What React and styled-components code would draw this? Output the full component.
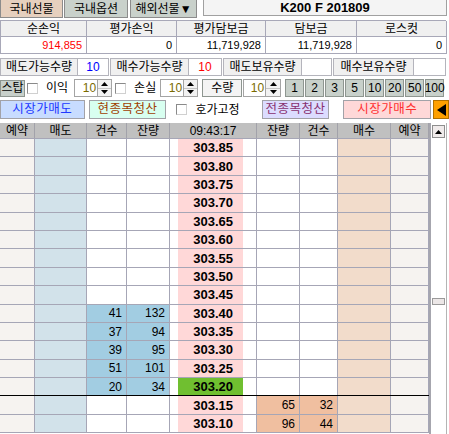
import React from "react";
import styled, { createGlobalStyle } from "styled-components";

const GlobalStyle = createGlobalStyle`
  html, body { margin: 0; padding: 0; background: #fff; }
  body {
    font-family: "Liberation Sans", "Noto Sans CJK KR", sans-serif;
    font-size: 12px;
    color: #000;
  }
  * { box-sizing: border-box; }
`;

const Page = styled.div`
  width: 449px;
  height: 434px;
  overflow: hidden;
  background: #fff;
  display: flex;
  flex-direction: column;
`;

/* ---------- top tabs ---------- */
const TopBar = styled.div`
  display: flex;
  align-items: flex-start;
  height: 20px;
`;

const Tab = styled.div`
  width: ${(p) => p.$w}px;
  height: 18px;
  margin-left: ${(p) => p.$ml || 0}px;
  background: ${(p) => (p.$active ? "#e6d0be" : "#c9d1cb")};
  border: 1px solid #8c8c8c;
  border-top: none;
  display: flex;
  align-items: center;
  justify-content: center;
  font-size: 12px;
  line-height: 16px;
`;

const SymbolBox = styled.div`
  width: 244px;
  height: 16px;
  margin-left: 6px;
  background: #f4f4f4;
  border: 1px solid #a0a0a0;
  border-top: none;
  display: flex;
  align-items: center;
  justify-content: center;
  font-weight: bold;
  font-size: 13px;
`;

/* ---------- summary table ---------- */
const Summary = styled.div`
  display: grid;
  grid-template-columns: 86px 90px 89px 91px 90px;
  grid-template-rows: 16px 17px;
  width: 446px;
  border-top: 1px solid #a8a8b8;
  border-left: 1px solid #a8a8b8;
`;

const SumHead = styled.div`
  background: #f0f0f0;
  border-right: 1px solid #a8a8b8;
  border-bottom: 1px solid #a8a8b8;
  display: flex;
  align-items: center;
  justify-content: center;
  line-height: 14px;
`;

const SumValue = styled.div`
  background: #fff;
  border-right: 1px solid #a8a8b8;
  border-bottom: 1px solid #a8a8b8;
  display: flex;
  align-items: center;
  justify-content: flex-end;
  padding-right: 4px;
  font-size: 11px;
  color: ${(p) => p.$color || "#000"};
`;

/* ---------- quantity row ---------- */
const QtyRow = styled.div`
  display: flex;
  height: 18px;
  margin-top: 4px;
`;

const QtyLabel = styled.div`
  width: ${(p) => p.$w}px;
  margin-left: ${(p) => p.$ml || 0}px;
  background: #f0f0f0;
  border: 1px solid #b4b4bc;
  display: flex;
  align-items: center;
  justify-content: center;
  line-height: 16px;
`;

const QtyValue = styled.div`
  width: ${(p) => p.$w}px;
  background: #fff;
  border: 1px solid #b4b4bc;
  border-left: none;
  display: flex;
  align-items: center;
  justify-content: center;
  font-size: 12px;
  color: ${(p) => p.$color || "#000"};
`;

/* ---------- control row ---------- */
const ControlRow = styled.div`
  display: flex;
  align-items: center;
  height: 18px;
  margin-top: 3px;
`;

const GrayButton = styled.div`
  width: ${(p) => p.$w}px;
  height: ${(p) => p.$h || 17}px;
  margin-left: ${(p) => p.$ml || 0}px;
  background: ${(p) => p.$bg || "#c8d0ca"};
  border: 1px solid #8e9690;
  display: flex;
  align-items: center;
  justify-content: center;
  font-size: 12px;
  line-height: 14px;
`;

const CheckBox = styled.div`
  width: 11px;
  height: 11px;
  margin-left: ${(p) => p.$ml || 0}px;
  background: #fff;
  border: 1px solid #8a8a8a;
  border-right-color: #d0d0d0;
  border-bottom-color: #d0d0d0;
  flex: none;
`;

const Label = styled.span`
  margin-left: ${(p) => p.$ml || 0}px;
  font-size: 12px;
  line-height: 14px;
  white-space: nowrap;
`;

const Spinner = styled.div`
  display: flex;
  height: 18px;
  margin-left: ${(p) => p.$ml || 0}px;
`;

const SpinInput = styled.div`
  width: ${(p) => p.$w}px;
  background: #fff;
  border: 1px solid #a4a4a4;
  color: #7a6a00;
  display: flex;
  align-items: center;
  justify-content: flex-end;
  padding-right: 1px;
  font-size: 12px;
`;

const SpinArrows = styled.div`
  width: ${(p) => p.$w || 14}px;
  display: flex;
  flex-direction: column;
  border: 1px solid #a4a4a4;
  border-left: none;
`;

const SpinBtn = styled.div`
  flex: 1;
  background: #f2f2f2;
  display: flex;
  align-items: center;
  justify-content: center;
  & + & {
    border-top: 1px solid #c4c4c4;
  }
`;

const NumButtons = styled.div`
  display: flex;
  gap: 1px;
  margin-left: ${(p) => p.$ml || 0}px;
`;

/* ---------- action row ---------- */
const ActionRow = styled.div`
  display: flex;
  align-items: center;
  height: 19px;
  margin-top: 3px;
`;

const ActionButton = styled.div`
  width: ${(p) => p.$w}px;
  height: 19px;
  margin-left: ${(p) => p.$ml || 0}px;
  background: ${(p) => p.$bg};
  color: ${(p) => p.$color};
  border: 1px solid #a2a2a8;
  display: flex;
  align-items: center;
  justify-content: center;
  font-size: 12.5px;
  line-height: 15px;
  letter-spacing: 0.5px;
`;

const ArrowButton = styled.div`
  width: 16px;
  height: 19px;
  margin-left: 2px;
  background: #ffa000;
  border: 1px solid #b07000;
  display: flex;
  align-items: center;
  justify-content: center;
`;

/* ---------- order book ---------- */
const COLS = "35px 52px 40px 43px 87px 43px 38px 53px 38px";

const BookArea = styled.div`
  display: flex;
  margin-top: 4px;
  flex: 1;
  min-height: 0;
`;

const Book = styled.div`
  width: 429px;
  display: flex;
  flex-direction: column;
`;

const BookRow = styled.div`
  display: grid;
  grid-template-columns: ${COLS};
  height: ${(p) => p.$h}px;
  flex: none;
  border-bottom: 1px solid ${(p) => (p.$divider ? "#000" : "#a6a6b6")};
`;

const HeadCell = styled.div`
  background: #c0c0c0;
  border-right: 1px solid #a2a2aa;
  display: flex;
  align-items: center;
  justify-content: center;
  font-size: 12px;
  line-height: 14px;
`;

const Cell = styled.div`
  background: ${(p) => p.$bg || "#fff"};
  border-right: 1px solid #a6a6b6;
  display: flex;
  align-items: center;
  justify-content: flex-end;
  padding-right: 4px;
  font-size: 12px;
`;

const PriceCell = styled.div`
  background: #fff;
  border-right: 1px solid #a6a6b6;
  display: flex;
  align-items: stretch;
  padding-left: 8px;
`;

const PriceBox = styled.div`
  width: 65px;
  background: ${(p) => (p.$current ? "#70bf30" : "#ffd8d8")};
  display: flex;
  align-items: center;
  justify-content: flex-end;
  padding-right: 10px;
  font-weight: bold;
  font-size: 13px;
`;

const ScrollBar = styled.div`
  width: 18px;
  border-left: 2px solid #a6a6ae;
  border-right: 1px solid #b4b4b4;
  background: #fff;
  display: flex;
  flex-direction: column;
  align-items: center;
`;

const ScrollUp = styled.div`
  width: 13px;
  height: 13px;
  margin-top: 2px;
  background: #f0ebeb;
  border: 1px solid #8e8e8e;
  display: flex;
  align-items: center;
  justify-content: center;
`;

const ScrollThumb = styled.div`
  width: 13px;
  height: 7px;
  margin-top: 160px;
  background: #ece7e7;
  border: 1px solid #9a9a9a;
`;

const Tri = ({ dir = "up", w = 7, h = 4 }) => {
  const pts =
    dir === "up"
      ? `0,${h} ${w / 2},0 ${w},${h}`
      : dir === "down"
      ? `0,0 ${w / 2},${h} ${w},0`
      : `${w},0 0,${h / 2} ${w},${h}`;
  return (
    <svg width={w} height={h} viewBox={`0 0 ${w} ${h}`}>
      <polygon points={pts} fill="#000" />
    </svg>
  );
};

const SpinBox = ({ ml, w, aw }) => (
  <Spinner $ml={ml}>
    <SpinInput $w={w}>10</SpinInput>
    <SpinArrows $w={aw}>
      <SpinBtn>
        <Tri dir="up" w={7} h={4} />
      </SpinBtn>
      <SpinBtn>
        <Tri dir="down" w={7} h={4} />
      </SpinBtn>
    </SpinArrows>
  </Spinner>
);

const prices = [
  "303.85", "303.80", "303.75", "303.70", "303.65", "303.60", "303.55", "303.50",
  "303.45", "303.40", "303.35", "303.30", "303.25", "303.20", "303.15", "303.10",
];
const sells = {
  "303.40": [41, 132],
  "303.35": [37, 94],
  "303.30": [39, 95],
  "303.25": [51, 101],
  "303.20": [20, 34],
};
const buys = {
  "303.15": [65, 32],
  "303.10": [96, 44],
};
const CURRENT = "303.20";

const C = {
  reserve: "#f6f3f0",
  sell: "#d2e2ea",
  sellHi: "#a2cde2",
  buy: "#f2dccb",
  buyHi: "#f0bfa0",
};

export default function App() {
  return (
    <Page>
      <GlobalStyle />
      <TopBar>
        <Tab $w={63} $active>국내선물</Tab>
        <Tab $w={64} $ml={1}>국내옵션</Tab>
        <Tab $w={67} $ml={2}>해외선물▼</Tab>
        <SymbolBox>K200 F 201809</SymbolBox>
      </TopBar>

      <Summary>
        <SumHead>순손익</SumHead>
        <SumHead>평가손익</SumHead>
        <SumHead>평가담보금</SumHead>
        <SumHead>담보금</SumHead>
        <SumHead>로스컷</SumHead>
        <SumValue $color="#ff0000">914,855</SumValue>
        <SumValue>0</SumValue>
        <SumValue>11,719,928</SumValue>
        <SumValue>11,719,928</SumValue>
        <SumValue>0</SumValue>
      </Summary>

      <QtyRow>
        <QtyLabel $w={78}>매도가능수량</QtyLabel>
        <QtyValue $w={31} $color="#0000ff">10</QtyValue>
        <QtyLabel $w={79} $ml={1}>매수가능수량</QtyLabel>
        <QtyValue $w={33} $color="#ff0000">10</QtyValue>
        <QtyLabel $w={79} $ml={1}>매도보유수량</QtyLabel>
        <QtyValue $w={30} />
        <QtyLabel $w={81} $ml={1}>매수보유수량</QtyLabel>
        <QtyValue $w={32} />
      </QtyRow>

      <ControlRow>
        <GrayButton $w={25}>스탑</GrayButton>
        <CheckBox $ml={2} />
        <Label $ml={8}>이익</Label>
        <SpinBox ml={6} w={24} aw={14} />
        <CheckBox $ml={3} />
        <Label $ml={8}>손실</Label>
        <SpinBox ml={4} w={24} aw={14} />
        <GrayButton $w={40} $ml={4} $bg="#f4f4f4" $h={18}>수량</GrayButton>
        <SpinBox ml={1} w={23} aw={15} />
        <NumButtons $ml={4}>
          {["1", "2", "3", "5", "10", "20", "50", "100"].map((n) => (
            <GrayButton key={n} $w={19} $h={18}>{n}</GrayButton>
          ))}
        </NumButtons>
      </ControlRow>

      <ActionRow>
        <ActionButton $w={85} $bg="#c8dcff" $color="#2038ff">시장가매도</ActionButton>
        <ActionButton $w={78} $ml={4} $bg="#d8fff0" $color="#a04000">현종목청산</ActionButton>
        <CheckBox $ml={10} />
        <Label $ml={8}>호가고정</Label>
        <ActionButton $w={68} $ml={22} $bg="#dcdcff" $color="#883070">전종목청산</ActionButton>
        <ActionButton $w={88} $ml={14} $bg="#ffd8d8" $color="#ff3030">시장가매수</ActionButton>
        <ArrowButton>
          <Tri dir="left" w={9} h={12} />
        </ArrowButton>
      </ActionRow>

      <BookArea>
        <Book>
          <BookRow $h={16}>
            <HeadCell>예약</HeadCell>
            <HeadCell>매도</HeadCell>
            <HeadCell>건수</HeadCell>
            <HeadCell>잔량</HeadCell>
            <HeadCell>09:43:17</HeadCell>
            <HeadCell>잔량</HeadCell>
            <HeadCell>건수</HeadCell>
            <HeadCell>매수</HeadCell>
            <HeadCell>예약</HeadCell>
          </BookRow>
          {prices.map((p) => {
            const s = sells[p];
            const b = buys[p];
            return (
              <BookRow key={p} $h={18.4} $divider={p === CURRENT}>
                <Cell $bg={C.reserve} />
                <Cell $bg={C.sell} />
                <Cell $bg={s ? C.sellHi : "#fff"}>{s ? s[0] : ""}</Cell>
                <Cell $bg={s ? C.sellHi : "#fff"}>{s ? s[1] : ""}</Cell>
                <PriceCell>
                  <PriceBox $current={p === CURRENT}>{p}</PriceBox>
                </PriceCell>
                <Cell $bg={b ? C.buyHi : "#fff"}>{b ? b[0] : ""}</Cell>
                <Cell $bg={b ? C.buyHi : "#fff"}>{b ? b[1] : ""}</Cell>
                <Cell $bg={C.buy} />
                <Cell $bg={C.reserve} />
              </BookRow>
            );
          })}
        </Book>
        <ScrollBar>
          <ScrollUp>
            <Tri dir="up" w={7} h={4} />
          </ScrollUp>
          <ScrollThumb />
        </ScrollBar>
      </BookArea>
    </Page>
  );
}
